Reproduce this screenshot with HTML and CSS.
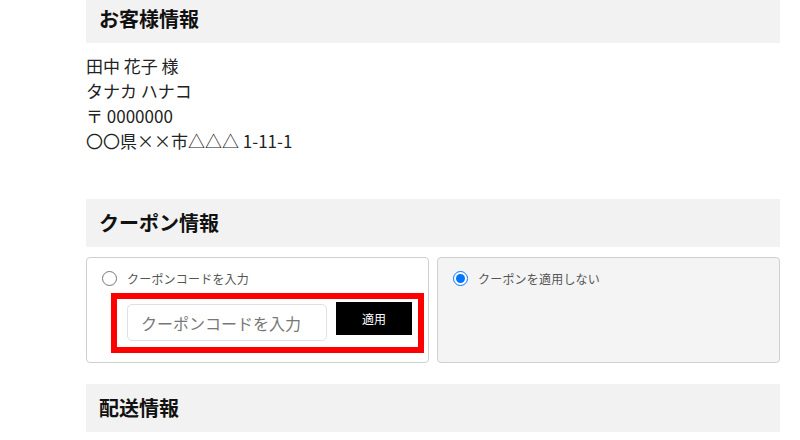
FILE: index.html
```html
<!DOCTYPE html>
<html lang="ja">
<head>
<meta charset="utf-8">
<title>注文情報</title>
<link rel="stylesheet" href="styles.css">
</head>
<body>
<div class="page">
  <section class="section section-customer">
    <h2 class="section-title">お客様情報</h2>
    <div class="address">
      <p>田中 花子 様</p>
      <p>タナカ ハナコ</p>
      <p>〒 0000000</p>
      <p>〇〇県××市△△△ 1-11-1</p>
    </div>
  </section>

  <section class="section section-coupon">
    <h2 class="section-title">クーポン情報</h2>
    <div class="coupon-grid">
      <div class="coupon-card">
        <label class="radio-row">
          <input type="radio" name="coupon" class="radio">
          <span class="radio-label">クーポンコードを入力</span>
        </label>
        <div class="code-box">
          <input type="text" class="code-input" placeholder="クーポンコードを入力">
          <button type="button" class="apply-btn">適用</button>
        </div>
      </div>
      <div class="coupon-card coupon-card-muted">
        <label class="radio-row">
          <input type="radio" name="coupon" class="radio" checked>
          <span class="radio-label">クーポンを適用しない</span>
        </label>
      </div>
    </div>
  </section>

  <section class="section">
    <h2 class="section-title">配送情報</h2>
  </section>
</div>
</body>
</html>
```

FILE: styles.css
```css
html, body {
  margin: 0;
  padding: 0;
  background: #fff;
}

body {
  font-family: "Noto Sans CJK JP", "Noto Sans", sans-serif;
  color: #222;
  overflow: hidden;
}

.page {
  width: 694px;
  margin: -5px 0 0 86px;
}

.section-title {
  margin: 0;
  height: 48px;
  box-sizing: border-box;
  padding: 0 0 0 13px;
  display: flex;
  align-items: center;
  background: #f2f2f2;
  font-size: 20px;
  font-weight: 700;
  color: #111;
  line-height: 1;
}

.section-customer {
  margin-bottom: 46px;
}

.address {
  padding-top: 10px;
  font-size: 17px;
  line-height: 25px;
}

.address p {
  margin: 0;
}

.section-coupon {
  margin-bottom: 21px;
}

.coupon-grid {
  margin-top: 10px;
  display: grid;
  grid-template-columns: 1fr 1fr;
  gap: 8px;
}

.coupon-card {
  border: 1px solid #cfcfcf;
  border-radius: 4px;
  padding: 10px 4px 9px 15px;
  background: #fff;
}

.coupon-card-muted {
  background: #f4f4f4;
}

.radio-row {
  display: flex;
  align-items: center;
  height: 20px;
  gap: 10px;
}

.radio {
  width: 15px;
  height: 15px;
  margin: 0;
  flex: none;
}

.radio-label {
  font-size: 12px;
  letter-spacing: 0.2px;
  color: #555;
}

.code-box {
  margin: 5px 0 0 9px;
  width: 313px;
  box-sizing: border-box;
  border: 6px solid #f00;
  display: flex;
  align-items: flex-start;
  gap: 9px;
  padding: 3px 6px 6px 10px;
}

.code-input {
  margin: 2px 0 0;
  width: 200px;
  height: 37px;
  box-sizing: border-box;
  border: 1px solid #e0e0e4;
  border-radius: 5px;
  padding: 0 13px;
  font-family: inherit;
  font-size: 16px;
  color: #333;
  background: #fff;
  outline: none;
}

.code-input::placeholder {
  color: #777;
}

.apply-btn {
  width: 76px;
  height: 33px;
  border: 0;
  margin: 0;
  padding: 0;
  background: #000;
  color: #fff;
  font-family: inherit;
  font-size: 12px;
  cursor: pointer;
}
```
